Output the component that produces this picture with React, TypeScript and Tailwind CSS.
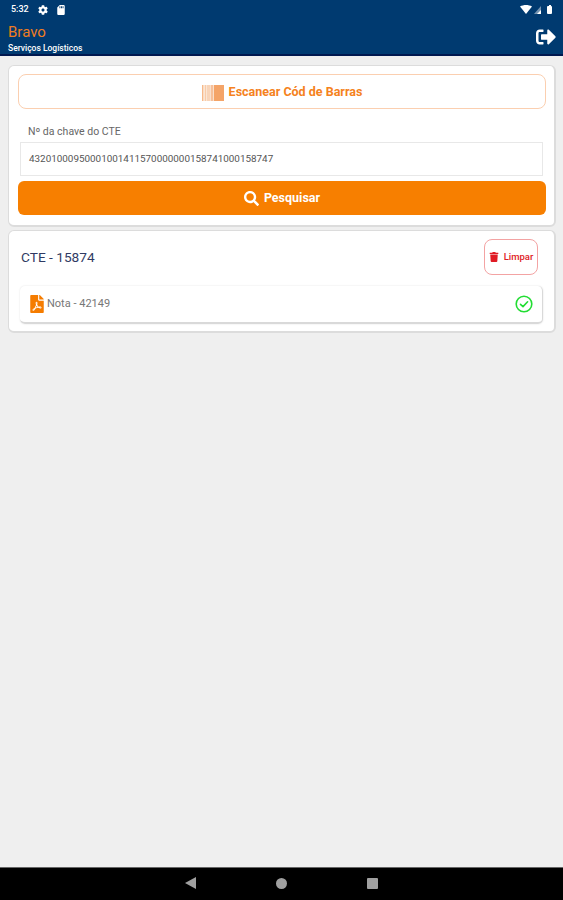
import { FaCog, FaSearch, FaSignOutAlt, FaTrash, FaFilePdf, FaSdCard } from "react-icons/fa";

const App = () => {
  return (
    <div className="flex h-[900px] w-[563px] flex-col overflow-hidden bg-[#efefef] font-['Roboto',sans-serif]">
      {/* Cabeçalho */}
      <header className="h-[56px] shrink-0 border-b-2 border-[#00184f] bg-[#003a70] text-white">
        <div className="flex h-[18px] items-center justify-between pl-[11px] pr-[11px] pt-[1px]">
          <div className="flex items-center gap-[9px]">
            <span className="text-[9px] font-medium leading-none">5:32</span>
            <FaCog className="text-[10px]" />
            <FaSdCard className="-ml-[1px] text-[10px]" />
          </div>
          <div className="flex items-center gap-[2px]">
            <svg width="12" height="9" viewBox="0 0 12 9">
              <path d="M0 1.5C3.5-.5 8.5-.5 12 1.5L6 9Z" fill="#fff" />
            </svg>
            <svg width="7" height="8" viewBox="0 0 7 8" className="mr-[4px]">
              <path d="M7 0V8H0Z" fill="#fff" opacity="0.45" />
              <path d="M7 4V8H3Z" fill="#fff" />
            </svg>
            <div className="flex flex-col items-center">
              <span className="h-[1px] w-[2px] bg-white" />
              <span className="h-[8px] w-[5px] rounded-[1px] bg-white" />
            </div>
          </div>
        </div>
        <div className="flex items-start justify-between pl-[8px] pr-[7px] pt-[5px]">
          <div>
            <h1 className="text-[15px] leading-[19px] text-[#ef7d22]">Bravo</h1>
            <p className="mt-[1px] text-[8.5px] font-medium leading-[10px]">Serviços Logísticos</p>
          </div>
          <FaSignOutAlt className="mt-[4px] text-[20px]" />
        </div>
      </header>

      <main className="flex grow flex-col gap-[3px] pl-[8px] pr-[7px] pt-[9px]">
        {/* Busca */}
        <section className="flex h-[162px] flex-col rounded-[6px] border border-r-2 border-b-2 border-[#dcdcdc] bg-white pl-[9px] pr-[8px] pt-[8px]">
          <button className="flex h-[35px] shrink-0 items-center justify-center gap-[5px] rounded-[8px] border border-[#fbcfb0] pt-[2px] text-[12.5px] font-bold text-[#f58220]">
            <svg width="22" height="16" viewBox="0 0 22 16">
              <rect x="0" width="1.5" height="16" fill="#f6b98a" />
              <rect x="2.5" width="2" height="16" fill="#f8cba8" />
              <rect x="5" width="3" height="16" fill="#f8d4b8" />
              <rect x="8.5" width="3" height="16" fill="#f6c09a" />
              <rect x="12" width="10" height="16" fill="#f4a468" />
            </svg>
            Escanear Cód de Barras
          </button>
          <label className="mt-[16px] pl-[10px] text-[10.5px] leading-[13px] text-[#666]">Nº da chave do CTE</label>
          <div className="ml-[2px] mr-[3px] mt-[4px] flex h-[34px] shrink-0 items-center border border-[#e8e8e8] px-[8px] text-[9.9px] text-[#555]">
            43201000950001001411570000000158741000158747
          </div>
          <button className="mt-[5px] flex h-[34px] shrink-0 items-center justify-center gap-[5px] rounded-[6px] bg-[#f77f00] pt-[1px] text-[12.5px] font-bold text-white">
            <FaSearch className="text-[15px]" />
            Pesquisar
          </button>
        </section>

        {/* Resultado */}
        <section className="h-[103px] rounded-[6px] border border-r-2 border-b-2 border-[#dcdcdc] bg-white pl-[12px] pr-[11px] pt-[8px]">
          <div className="flex h-[36px] items-center justify-between pr-[5px]">
            <h2 className="text-[13.7px] text-[#2f3a63]">CTE - 15874</h2>
            <button className="flex h-[36px] w-[54px] items-center justify-center gap-[5px] rounded-[8px] border border-[#f3a3a3] text-[9.5px] font-medium text-[#e01b24]">
              <FaTrash className="text-[10px]" />
              Limpar
            </button>
          </div>
          <div className="-ml-[1px] mt-[11px] flex h-[38px] items-center justify-between rounded-[5px] border-b-2 border-r border-[#d9d9d9] pl-[9px] pr-[9px] shadow-[0_0_2px_rgba(0,0,0,0.12)]">
            <div className="flex items-center gap-[1px]">
              <FaFilePdf className="-ml-[1px] text-[18px] text-[#f57c00]" />
              <span className="pt-[1px] text-[11px] text-[#777]">Nota - 42149</span>
            </div>
            <svg width="18" height="18" viewBox="0 0 18 18" fill="none" stroke="#22dd33" strokeWidth="1.6" strokeLinecap="round" strokeLinejoin="round">
              <circle cx="9" cy="9" r="7.8" />
              <path d="M5.5 9.3 8 11.6 12.6 6.8" />
            </svg>
          </div>
        </section>
      </main>

      {/* Barra de navegação */}
      <nav className="h-[33px] shrink-0 border-t border-[#666] bg-black">
        <div className="flex h-full items-center justify-center gap-[80px] pb-[2px]">
          <svg width="11" height="12" viewBox="0 0 11 12"><path d="M11 0V12L0 6Z" fill="#a0a0a0" /></svg>
          <span className="h-[11px] w-[11px] rounded-full bg-[#a0a0a0]" />
          <span className="h-[11px] w-[11px] rounded-[1px] bg-[#a0a0a0]" />
        </div>
      </nav>
    </div>
  );
};

export default App;
